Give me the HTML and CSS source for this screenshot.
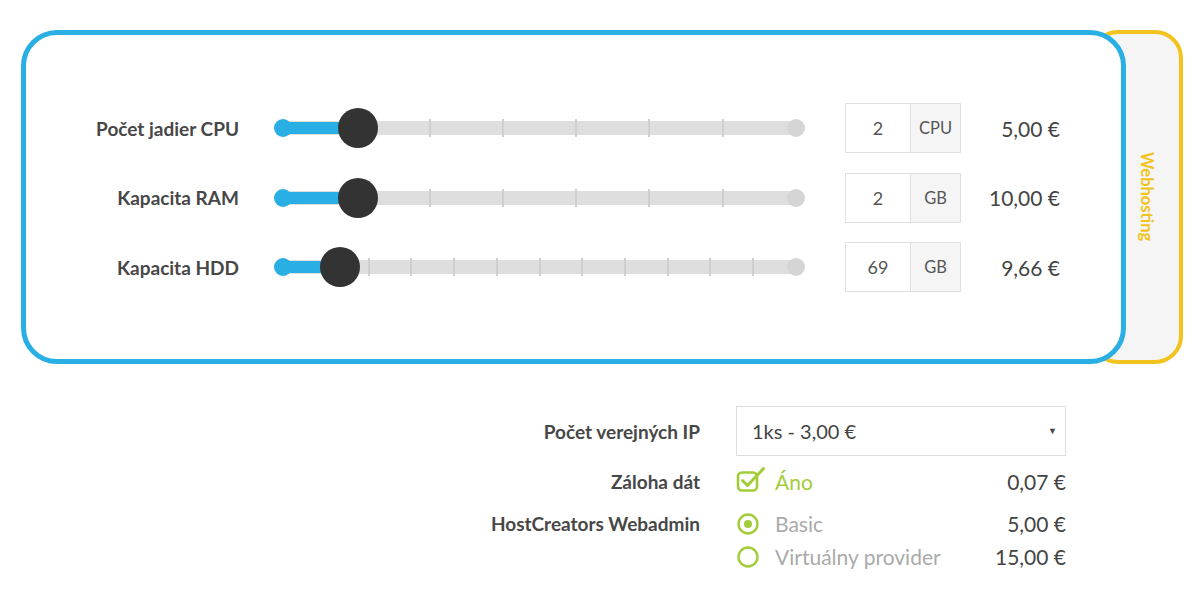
FILE: index.html
```html
<!DOCTYPE html>
<html lang="sk">
<head>
  <meta charset="UTF-8" />
  <meta name="viewport" content="width=device-width, initial-scale=1.0"/>
  <title>Konfigurátor VPS</title>
  <link rel="stylesheet" href="styles.css">
</head>
<body>
  <div class="wrap">

    <div class="panel-row">
      <div class="panel">
        <div class="param">
          <label class="param-label">Počet jadier CPU</label>
          <div class="slider">
            <div class="rail">
              <div class="fill" style="width: 14.29%"></div>
              <span class="tick" style="left: 28.57%"></span>
              <span class="tick" style="left: 42.86%"></span>
              <span class="tick" style="left: 57.14%"></span>
              <span class="tick" style="left: 71.43%"></span>
              <span class="tick" style="left: 85.71%"></span>
              <span class="thumb" style="left: 14.29%"></span>
            </div>
          </div>
          <div class="qty">
            <span class="qty-val">2</span>
            <span class="qty-unit">CPU</span>
          </div>
          <div class="price">5,00 €</div>
        </div>

        <div class="param">
          <label class="param-label">Kapacita RAM</label>
          <div class="slider">
            <div class="rail">
              <div class="fill" style="width: 14.29%"></div>
              <span class="tick" style="left: 28.57%"></span>
              <span class="tick" style="left: 42.86%"></span>
              <span class="tick" style="left: 57.14%"></span>
              <span class="tick" style="left: 71.43%"></span>
              <span class="tick" style="left: 85.71%"></span>
              <span class="thumb" style="left: 14.29%"></span>
            </div>
          </div>
          <div class="qty">
            <span class="qty-val">2</span>
            <span class="qty-unit">GB</span>
          </div>
          <div class="price">10,00 €</div>
        </div>

        <div class="param">
          <label class="param-label">Kapacita HDD</label>
          <div class="slider">
            <div class="rail">
              <div class="fill" style="width: 10.7%"></div>
              <span class="tick" style="left: 16.67%"></span>
              <span class="tick" style="left: 25%"></span>
              <span class="tick" style="left: 33.33%"></span>
              <span class="tick" style="left: 41.67%"></span>
              <span class="tick" style="left: 50%"></span>
              <span class="tick" style="left: 58.33%"></span>
              <span class="tick" style="left: 66.67%"></span>
              <span class="tick" style="left: 75%"></span>
              <span class="tick" style="left: 83.33%"></span>
              <span class="tick" style="left: 91.67%"></span>
              <span class="thumb" style="left: 10.7%"></span>
            </div>
          </div>
          <div class="qty">
            <span class="qty-val">69</span>
            <span class="qty-unit">GB</span>
          </div>
          <div class="price">9,66 €</div>
        </div>
      </div>

      <div class="tab">
        <span class="tab-text">Webhosting</span>
      </div>
    </div>

    <div class="extras">
      <div class="field">
        <div class="field-label">Počet verejných IP</div>
        <div class="select-wrap">
          <select class="select">
            <option>1ks - 3,00 €</option>
            <option>2ks - 6,00 €</option>
          </select>
        </div>
      </div>

      <div class="field field-check">
        <div class="field-label">Záloha dát</div>
        <div class="options">
          <div class="option">
            <svg class="icon check" width="30" height="30" viewBox="0 0 30 30">
              <rect x="2" y="7.5" width="19" height="18" rx="4" fill="none" stroke="#a2cd39" stroke-width="2.6"/>
              <path d="M6.5 15.5 L11.5 20.5 L27.5 3.5" fill="none" stroke="#a2cd39" stroke-width="3" stroke-linecap="round" stroke-linejoin="round"/>
            </svg>
            <span class="option-text checked">Áno</span>
            <span class="option-price">0,07 €</span>
          </div>
        </div>
      </div>

      <div class="field field-top">
        <div class="field-label">HostCreators Webadmin</div>
        <div class="options">
          <div class="option">
            <svg class="icon radio" width="22" height="22" viewBox="0 0 22 22">
              <circle cx="11" cy="11" r="9.5" fill="none" stroke="#a2cd39" stroke-width="2.4"/>
              <circle cx="11" cy="11" r="4" fill="#a2cd39"/>
            </svg>
            <span class="option-text">Basic</span>
            <span class="option-price">5,00 €</span>
          </div>
          <div class="option">
            <svg class="icon radio" width="22" height="22" viewBox="0 0 22 22">
              <circle cx="11" cy="11" r="9.5" fill="none" stroke="#a2cd39" stroke-width="2.4"/>
            </svg>
            <span class="option-text">Virtuálny provider</span>
            <span class="option-price">15,00 €</span>
          </div>
        </div>
      </div>
    </div>

  </div>
</body>
</html>
```

FILE: styles.css
```css
* {
  box-sizing: border-box;
  margin: 0;
  padding: 0;
}

body {
  font-family: 'Lato', 'Open Sans', sans-serif;
  background: #fff;
  color: #444;
}

.wrap {
  padding: 30px 0 0 21px;
}

/* top box */

.panel-row {
  display: flex;
}

.panel {
  position: relative;
  z-index: 1;
  width: 1105px;
  height: 334px;
  border: 5px solid #29afe3;
  border-radius: 36px;
  background: #fff;
  padding-top: 68px;
  display: flex;
  flex-direction: column;
  gap: 19.5px;
}

.tab {
  width: 93px;
  height: 334px;
  margin-left: -36px;
  border: 4px solid #f1c31c;
  border-radius: 28px;
  background: #f5f5f5;
  display: flex;
  align-items: center;
  justify-content: center;
  padding-left: 20px;
}

.tab-text {
  writing-mode: vertical-rl;
  color: #f1c31c;
  font-size: 16.5px;
  font-weight: 700;
}

.param {
  display: flex;
  align-items: center;
  height: 50px;
}

.param-label {
  width: 213px;
  text-align: right;
  font-size: 19px;
  font-weight: 700;
  color: #474747;
}

.slider {
  width: 531px;
  margin-left: 35px;
  padding: 0 9px;
}

.rail {
  position: relative;
  height: 14px;
  background: #dedede;
}

.rail::before,
.rail::after {
  content: "";
  position: absolute;
  top: 50%;
  width: 18px;
  height: 18px;
  margin-top: -9px;
  border-radius: 50%;
}

.rail::before {
  left: -9px;
  background: #29afe3;
  z-index: 1;
}

.rail::after {
  right: -9px;
  background: #d5d5d5;
}

.fill {
  position: absolute;
  left: 0;
  top: 1px;
  height: 12px;
  background: #29afe3;
}

.tick {
  position: absolute;
  top: -2px;
  width: 2px;
  height: 18px;
  margin-left: -1px;
  background: #cfcfcf;
}

.thumb {
  position: absolute;
  top: 50%;
  width: 40px;
  height: 40px;
  margin: -20px 0 0 -18px;
  border-radius: 50%;
  background: #333;
  z-index: 2;
}

.qty {
  display: flex;
  width: 116px;
  height: 50px;
  margin-left: 40px;
  border: 1px solid #e0e0e0;
}

.qty-val {
  width: 64px;
  display: flex;
  align-items: center;
  justify-content: center;
  font-size: 18px;
  color: #555;
}

.qty-unit {
  flex: 1;
  display: flex;
  align-items: center;
  justify-content: center;
  border-left: 1px solid #e0e0e0;
  background: #f5f5f5;
  font-size: 16.5px;
  color: #555;
}

.price {
  width: 99px;
  text-align: right;
  font-size: 21px;
  color: #444;
}

/* extras below */

.extras {
  margin-top: 42px;
}

.field {
  display: grid;
  grid-template-columns: 679px 330px;
  column-gap: 36px;
  align-items: center;
}

.field-check {
  margin-top: 9px;
}

.field-top {
  align-items: start;
  margin-top: 9px;
}

.field-label {
  text-align: right;
  font-size: 19px;
  font-weight: 700;
  color: #474747;
  line-height: 33px;
}

.select-wrap {
  position: relative;
}

.select-wrap::after {
  content: "▼";
  position: absolute;
  right: 9px;
  top: 50%;
  margin-top: -6px;
  font-size: 9px;
  color: #444;
  pointer-events: none;
}

.select {
  display: block;
  width: 100%;
  height: 50px;
  padding-left: 15px;
  border: 1px solid #dedede;
  background: #fff;
  font-family: 'Lato', sans-serif;
  font-size: 20px;
  color: #444;
  appearance: none;
  -webkit-appearance: none;
  border-radius: 0;
}

.option {
  display: flex;
  align-items: center;
  height: 33px;
}

.field-check .option {
  height: 32px;
}

.icon {
  display: block;
  flex-shrink: 0;
}

.radio {
  margin-left: 1px;
  margin-right: 16px;
}

.check {
  margin-right: 9px;
  margin-top: -4px;
}

.option-text {
  font-size: 21px;
  color: #aaa;
}

.option-text.checked {
  color: #a2cd39;
}

.option-price {
  margin-left: auto;
  font-size: 21px;
  color: #444;
}
```
